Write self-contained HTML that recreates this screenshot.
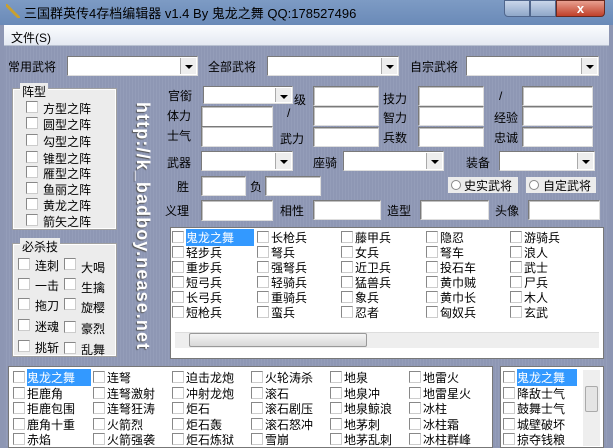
<!DOCTYPE html><html><head><meta charset="utf-8"><style>
*{margin:0;padding:0;box-sizing:border-box}
body{width:613px;height:446px;overflow:hidden;position:relative;font-family:"Liberation Sans","Noto Sans CJK SC",sans-serif;font-size:12px;color:#000;background:#8d96b3}
.a{position:absolute;white-space:nowrap}
.title{left:0;top:0;width:613px;height:25px;background:linear-gradient(#7d9bc4,#6a8ab8);}
.menu{left:4px;top:25px;width:605px;height:21px;background:linear-gradient(#fbfcfe,#e4e9f2);border-bottom:1px solid #b8c0d0}
.main{left:4px;top:46px;width:605px;height:400px;background:repeating-linear-gradient(90deg,#8e97b4 0 2px,#949db9 2px 3px),#8e97b4;}
.box{position:absolute;background:#fff;border:1px solid #7a7a7a;border-right-color:#ddd;border-bottom-color:#ddd;box-shadow:inset 1px 1px 0 #c0c0c0}
.cb{position:absolute;background:#fff;border:1px solid #7a7a7a;border-right-color:#ddd;border-bottom-color:#ddd;}
.btn{position:absolute;right:1px;top:1px;bottom:1px;width:16px;background:#eee;border-left:1px solid #aaa}
.btn:after{content:"";position:absolute;left:4px;top:7px;border:4px solid transparent;border-top:4px solid #000;border-bottom:0}
.grp{position:absolute;background:#ececec;border:1px solid #fff;box-shadow:0 0 0 1px #a0a0a0}
.ck{position:absolute;width:12px;height:12px;background:#fff;border:1px solid #888;border-right-color:#ccc;border-bottom-color:#ccc}
.lst{position:absolute;background:#fff;border:1px solid #777}
.sel{background:#3399ff;color:#fff}
</style></head><body>
<div class="a title"></div>
<div class="a" style="left:6px;top:4px;width:14px;height:14px;background:linear-gradient(45deg,transparent 40%,#c8a030 40%,#c8a030 55%,transparent 55%)"></div>
<div class="a" style="left:24px;top:3px;font-size:13px;color:#000">三国群英传4存档编辑器 v1.4 By 鬼龙之舞 QQ:178527496</div>
<div class="a" style="left:504px;top:0;width:26px;height:17px;background:linear-gradient(#c9d6ea,#8fa7c9);border:1px solid #50668c;border-radius:0 0 0 4px"></div>
<div class="a" style="left:530px;top:0;width:26px;height:17px;background:linear-gradient(#c9d6ea,#8fa7c9);border:1px solid #50668c"></div>
<div class="a" style="left:556px;top:0;width:49px;height:17px;background:linear-gradient(#e8a090,#c0402a);border:1px solid #6a2a20;border-radius:0 0 4px 0;color:#fff;text-align:center;font-weight:bold;font-size:13px;line-height:15px">x</div>
<div class="a menu"></div>
<div class="a" style="left:11px;top:29px">文件(S)</div>
<div class="a main"></div>

<div class="a" style="left:8px;top:58px">常用武将</div>
<div class="cb" style="left:67px;top:56px;width:131px;height:20px"><div class="btn"></div></div>
<div class="a" style="left:208px;top:58px">全部武将</div>
<div class="cb" style="left:267px;top:56px;width:132px;height:20px"><div class="btn"></div></div>
<div class="a" style="left:410px;top:58px">自宗武将</div>
<div class="cb" style="left:466px;top:56px;width:133px;height:20px"><div class="btn"></div></div>

<div class="grp" style="left:13px;top:89px;width:103px;height:140px"></div>
<div class="a" style="left:20px;top:83px;background:#ececec;padding:0 2px">阵型</div>
<div class="ck" style="left:26px;top:101px"></div><div class="a" style="left:43px;top:100px">方型之阵</div>
<div class="ck" style="left:26px;top:117px"></div><div class="a" style="left:43px;top:116px">圆型之阵</div>
<div class="ck" style="left:26px;top:134px"></div><div class="a" style="left:43px;top:133px">勾型之阵</div>
<div class="ck" style="left:26px;top:151px"></div><div class="a" style="left:43px;top:150px">锥型之阵</div>
<div class="ck" style="left:26px;top:166px"></div><div class="a" style="left:43px;top:165px">雁型之阵</div>
<div class="ck" style="left:26px;top:182px"></div><div class="a" style="left:43px;top:181px">鱼丽之阵</div>
<div class="ck" style="left:26px;top:198px"></div><div class="a" style="left:43px;top:197px">黄龙之阵</div>
<div class="ck" style="left:26px;top:214px"></div><div class="a" style="left:43px;top:213px">箭矢之阵</div>

<div class="grp" style="left:13px;top:244px;width:103px;height:112px"></div>
<div class="a" style="left:20px;top:238px;background:#ececec;padding:0 2px">必杀技</div>
<div class="ck" style="left:18px;top:258px"></div><div class="a" style="left:35px;top:257px">连刺</div>
<div class="ck" style="left:64px;top:258px"></div><div class="a" style="left:81px;top:259px">大喝</div>
<div class="ck" style="left:18px;top:278px"></div><div class="a" style="left:35px;top:277px">一击</div>
<div class="ck" style="left:64px;top:278px"></div><div class="a" style="left:81px;top:279px">生擒</div>
<div class="ck" style="left:18px;top:298px"></div><div class="a" style="left:35px;top:297px">拖刀</div>
<div class="ck" style="left:64px;top:298px"></div><div class="a" style="left:81px;top:299px">旋樱</div>
<div class="ck" style="left:18px;top:319px"></div><div class="a" style="left:35px;top:318px">迷魂</div>
<div class="ck" style="left:64px;top:321px"></div><div class="a" style="left:81px;top:320px">豪烈</div>
<div class="ck" style="left:18px;top:340px"></div><div class="a" style="left:35px;top:339px">挑斩</div>
<div class="ck" style="left:64px;top:342px"></div><div class="a" style="left:81px;top:341px">乱舞</div>

<div class="a" style="left:142px;top:102px;transform-origin:0 0;transform:translate(11px,0) rotate(90deg);font-weight:bold;font-size:18px;color:#fff;letter-spacing:1.1px;text-shadow:1px 1px 1px #555">http://k_badboy.nease.net</div>

<div class="a" style="left:168px;top:87px">官銜</div>
<div class="cb" style="left:203px;top:86px;width:90px;height:18px"><div class="btn"></div></div>
<div class="a" style="left:294px;top:91px">级</div><div class="box" style="left:313px;top:86px;width:66px;height:20px"></div>
<div class="a" style="left:383px;top:90px">技力</div><div class="box" style="left:418px;top:86px;width:66px;height:20px"></div>
<div class="a" style="left:499px;top:89px">/</div><div class="box" style="left:522px;top:86px;width:71px;height:20px"></div>

<div class="a" style="left:167px;top:107px">体力</div>
<div class="box" style="left:201px;top:106px;width:72px;height:21px"></div>
<div class="a" style="left:287px;top:106px">/</div><div class="box" style="left:313px;top:106px;width:66px;height:20px"></div>
<div class="a" style="left:383px;top:109px">智力</div><div class="box" style="left:418px;top:106px;width:66px;height:20px"></div>
<div class="a" style="left:494px;top:109px">经验</div><div class="box" style="left:522px;top:106px;width:71px;height:20px"></div>

<div class="a" style="left:167px;top:127px">士气</div>
<div class="box" style="left:201px;top:126px;width:72px;height:21px"></div>
<div class="a" style="left:280px;top:130px">武力</div><div class="box" style="left:313px;top:127px;width:66px;height:20px"></div>
<div class="a" style="left:383px;top:129px">兵数</div><div class="box" style="left:418px;top:127px;width:66px;height:20px"></div>
<div class="a" style="left:494px;top:129px">忠诚</div><div class="box" style="left:522px;top:127px;width:71px;height:20px"></div>

<div class="a" style="left:167px;top:154px">武器</div>
<div class="cb" style="left:201px;top:151px;width:92px;height:20px"><div class="btn"></div></div>
<div class="a" style="left:313px;top:154px">座骑</div>
<div class="cb" style="left:343px;top:151px;width:101px;height:20px"><div class="btn"></div></div>
<div class="a" style="left:466px;top:154px">装备</div>
<div class="cb" style="left:499px;top:151px;width:96px;height:20px"><div class="btn"></div></div>

<div class="a" style="left:177px;top:178px">胜</div><div class="box" style="left:201px;top:176px;width:45px;height:20px"></div>
<div class="a" style="left:250px;top:178px">负</div><div class="box" style="left:265px;top:176px;width:56px;height:20px"></div>
<div class="a" style="left:448px;top:177px;width:70px;height:16px;background:#ececec"></div>
<div class="a" style="left:451px;top:180px;width:10px;height:10px;border-radius:50%;border:1px solid #888;background:#fff"></div>
<div class="a" style="left:464px;top:177px">史实武将</div>
<div class="a" style="left:526px;top:177px;width:70px;height:16px;background:#ececec"></div>
<div class="a" style="left:529px;top:180px;width:10px;height:10px;border-radius:50%;border:1px solid #888;background:#fff"></div>
<div class="a" style="left:543px;top:177px">自定武将</div>

<div class="a" style="left:165px;top:202px">义理</div><div class="box" style="left:201px;top:200px;width:72px;height:21px"></div>
<div class="a" style="left:280px;top:202px">相性</div><div class="box" style="left:313px;top:200px;width:68px;height:20px"></div>
<div class="a" style="left:387px;top:202px">造型</div><div class="box" style="left:420px;top:200px;width:69px;height:20px"></div>
<div class="a" style="left:495px;top:202px">头像</div><div class="box" style="left:528px;top:200px;width:72px;height:20px"></div>

<div class="lst" style="left:170px;top:227px;width:434px;height:132px"></div>
<div class="a" style="left:175px;top:332px;width:424px;height:16px;background:#eee;border-top:1px solid #ddd"></div>
<div class="a" style="left:189px;top:333px;width:178px;height:14px;background:linear-gradient(#f4f4f4,#d8d8d8);border:1px solid #999;border-radius:2px"></div>
<div id="s"></div>

<div class="lst" style="left:8px;top:366px;width:485px;height:82px"></div>
<div class="lst" style="left:500px;top:366px;width:104px;height:82px"></div>
<div class="a" style="left:583px;top:370px;width:17px;height:76px;background:#eee"></div>
<div class="a" style="left:585px;top:386px;width:13px;height:26px;background:#e4e4e4;border:1px solid #aaa;border-radius:2px"></div>
<div id="b"></div>
<script>
function put(el,cols,rows,data,dy,sel){var h='';data.forEach(function(col,ci){col.forEach(function(t,ri){var x=cols[ci],y=rows+ri*dy;h+='<div class="ck" style="left:'+(x-14)+'px;top:'+(y+2)+'px"></div><div class="a'+(ci==0&&ri==0?' sel':'')+'" style="left:'+x+'px;top:'+y+'px;'+(ci==0&&ri==0?'width:'+sel+'px;':'')+'">'+t+'</div>';});});document.getElementById(el).innerHTML+=h;}
put('s',[186,271,355,440,524],229,[["鬼龙之舞","轻步兵","重步兵","短弓兵","长弓兵","短枪兵"],["长枪兵","弩兵","强弩兵","轻骑兵","重骑兵","蛮兵"],["藤甲兵","女兵","近卫兵","猛兽兵","象兵","忍者"],["隐忍","弩车","投石车","黄巾贼","黄巾长","匈奴兵"],["游骑兵","浪人","武士","尸兵","木人","玄武"]],15,68);
put('b',[27,107,186,265,344,423],369,[["鬼龙之舞","拒鹿角","拒鹿包围","鹿角十重","赤焰"],["连弩","连弩激射","连弩狂涛","火箭烈","火箭强袭"],["迫击龙炮","冲射龙炮","炬石","炬石轰","炬石炼狱"],["火轮涛杀","滚石","滚石剧压","滚石怒冲","雪崩"],["地泉","地泉冲","地泉鲸浪","地茅刺","地茅乱刺"],["地雷火","地雷星火","冰柱","冰柱霜","冰柱群峰"]],15.5,64);
put('b',[517],369,[["鬼龙之舞","降敌士气","鼓舞士气","城壁破坏","掠夺钱粮"]],15.5,60);
</script>
</body></html>
